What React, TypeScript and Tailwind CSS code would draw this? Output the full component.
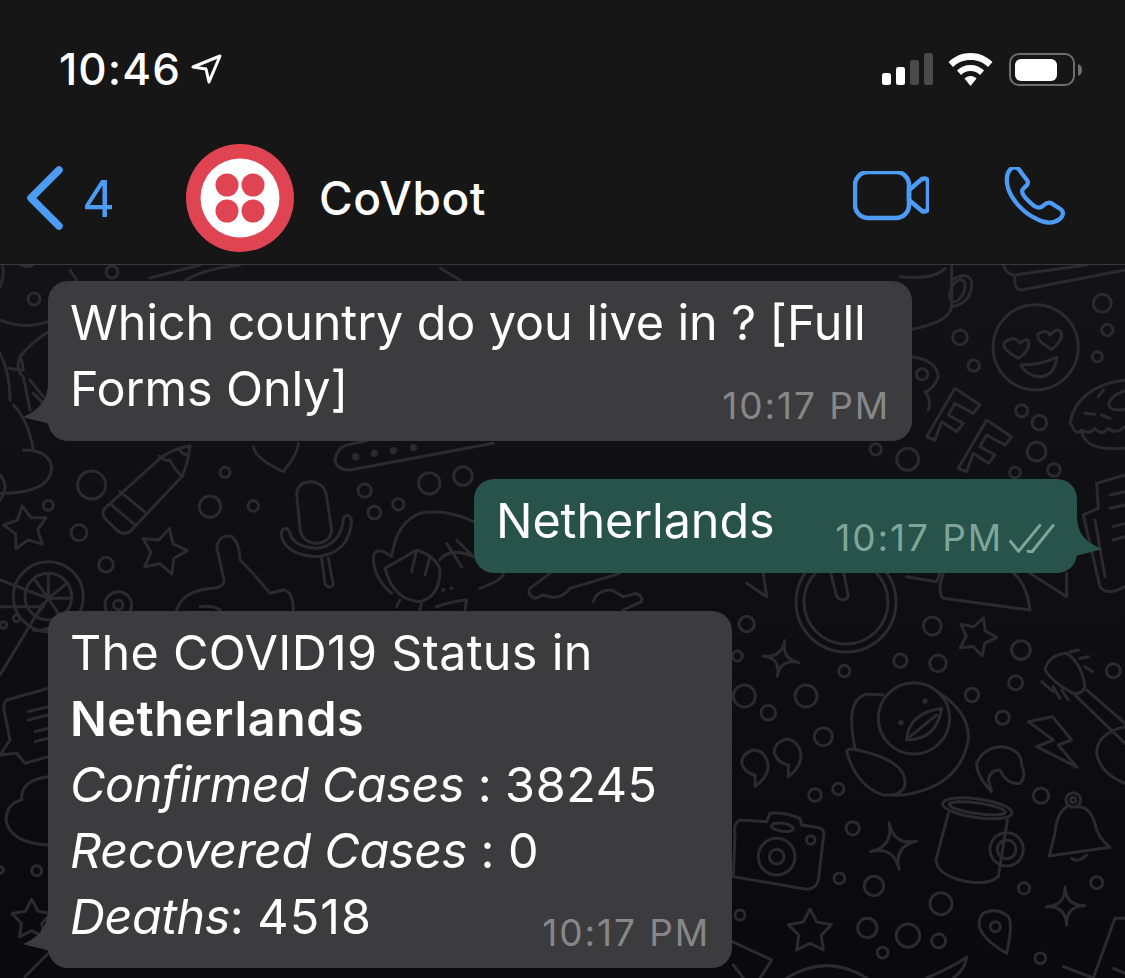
import React from "react";

function star(cx: number, cy: number, R: number, rot = -90) {
  let d = "";
  for (let i = 0; i < 10; i++) {
    const r = i % 2 === 0 ? R : R * 0.52;
    const a = ((rot + i * 36) * Math.PI) / 180;
    d += `${i === 0 ? "M" : "L"}${(cx + r * Math.cos(a)).toFixed(1)} ${(cy + r * Math.sin(a)).toFixed(1)} `;
  }
  return d + "Z";
}

function sparkle(t: number[], r: number[], b: number[], l: number[], c: number[]) {
  const q = (p: number[]) => `Q${c[0]} ${c[1]} ${p[0]} ${p[1]} `;
  return `M${t[0]} ${t[1]} ` + q(r) + q(b) + q(l) + q(t) + "Z";
}

function Circles({ items }: { items: number[][] }) {
  return (
    <>
      {items.map(([cx, cy, r], i) => (
        <circle key={i} cx={cx} cy={cy} r={r} />
      ))}
    </>
  );
}

const INK = "#2b2b2e";

function Doodles() {
  return (
    <svg
      className="absolute inset-0 w-full h-full"
      viewBox="0 265 1125 713"
      fill="none"
      stroke={INK}
      strokeWidth="3"
      strokeLinecap="round"
      strokeLinejoin="round"
    >
      <g transform="translate(0 380) scale(.3333)" strokeWidth="9">
        <path d="M320 380L480 235Q520 205 570 197Q565 250 545 290L395 450Q375 470 350 450L315 415Q300 398 320 380Z" />
        <path d="M360 335L440 400M335 375L405 435M478 228Q495 245 510 240Q520 265 548 290M537 205Q545 225 565 225" />
        <path d="M760 200Q765 235 850 275Q895 220 895 190" />
        <path d="M1480 190L1050 270Q1010 270 1005 240Q1010 205 1040 195L1100 182" />
        <g fill={INK} stroke="none">
          <Circles items={[[1067, 230, 11], [1123, 220, 11], [1180, 212, 11], [1240, 203, 11]]} />
        </g>
        <Circles items={[[275, 315, 42], [675, 277, 15], [630, 380, 32], [760, 378, 16], [145, 376, 15], [237, 458, 24], [318, 554, 22], [1094, 332, 20], [1288, 310, 32], [1389, 288, 28], [1123, 398, 19], [1195, 373, 17], [355, 675, 40], [355, 675, 14]]} />
        <path d={star(78, 445, 68, -100)} />
        <path d={star(490, 515, 72, -75)} />
        <path d="M890 340Q895 305 935 305Q975 310 980 350L995 450Q990 490 945 490Q905 485 900 445Z" />
        <path d="M855 445Q840 450 845 470Q860 525 950 530Q1050 520 1055 420Q1045 395 1030 415Q1025 495 950 505Q880 500 870 460Q865 445 855 445ZM965 535L975 610Q985 630 1000 615L985 535" />
        <path d="M530 690Q550 630 640 625Q680 620 670 590L650 500Q660 460 695 470Q720 490 720 540Q770 590 810 640L850 630Q880 635 880 690M600 680Q640 675 660 690" />
        <path d="M1420 425Q1340 385 1260 400Q1190 425 1175 530Q1120 490 1120 540Q1125 600 1175 640M1155 565Q1180 660 1260 665Q1320 650 1320 570Q1310 530 1250 510Q1200 540 1155 565ZM1250 510L1235 575M1290 530L1275 585M1320 540Q1350 500 1420 530M1340 490L1385 560M1370 480L1420 530M1190 680L1200 660M1260 690L1265 670M1310 680Q1350 665 1400 660L1395 690" />
        <circle cx="1330" cy="630" r="6" fill={INK} stroke="none" />
        <circle cx="1355" cy="625" r="6" fill={INK} stroke="none" />
        <path d="M100 210Q85 120 40 75M0 340Q150 340 155 265Q150 210 70 210M0 285Q30 320 0 360" />
        <circle cx="145" cy="650" r="105" />
        <circle cx="145" cy="650" r="70" />
        <path d="M145 655L145 580M145 655L200 610M145 655L215 655M145 655L100 720M145 655L185 715M145 655L105 600M0 600L145 655M0 680L130 680" />
      </g>
      <g transform="translate(720 620) scale(.3333)" strokeWidth="9">
        <Circles items={[[73, 228, 33], [258, 228, 33], [145, 278, 22], [310, 350, 27], [373, 153, 17], [541, 122, 20], [654, 130, 25], [637, 18, 27], [80, 12, 23], [52, 108, 15], [903, 90, 28], [887, 188, 21], [1180, 152, 21], [756, 225, 20], [848, 293, 20], [963, 527, 23], [285, 525, 19], [355, 507, 17], [398, 625, 20], [358, 775, 16], [462, 798, 29], [663, 851, 33], [912, 805, 17], [1130, 788, 18], [60, 885, 15], [442, 924, 29], [564, 947, 35], [656, 963, 21], [488, 998, 16], [961, 1015, 16]]} />
        <path d={star(270, 935, 68, -90)} />
        <path d={star(770, 50, 60, -70)} />
        <path d={sparkle([195, 62], [236, 128], [172, 168], [130, 108], [183, 115])} />
        <path d={sparkle([507, 608], [590, 663], [537, 748], [452, 695], [522, 678])} />
        <path d={sparkle([1035, 800], [1095, 857], [1040, 915], [978, 860], [1037, 858])} />
        <circle cx="582" cy="295" r="107" />
        <path d="M490 225L440 222Q395 235 395 300Q395 340 405 385M660 220Q750 280 745 360Q720 500 550 525L490 525Q410 500 380 395Q380 385 400 388Q560 420 555 490Q555 515 520 525" />
        <path d="M560 360Q565 280 665 265Q650 360 560 360ZM570 350L650 285" />
        <circle cx="615" cy="243" r="8" fill={INK} stroke="none" />
        <circle cx="543" cy="308" r="8" fill={INK} stroke="none" />
        <path d="M105 500Q145 470 145 435Q135 390 100 390Q65 400 65 430Q75 460 105 465Z" />
        <path d="M205 470Q245 440 243 400Q230 355 195 358Q160 370 163 400Q175 430 205 435Z" />
        <path d="M815 515Q770 470 770 430Q790 380 850 380Q905 390 905 435Q920 470 900 490Q860 495 840 450Q810 450 805 480Z" />
        <path d="M925 305L998 290L1055 360L1015 375L1072 442L950 380L1000 360Z" />
        <path d="M60 600Q40 610 45 640L40 770L260 808Q290 805 295 780L312 640Q310 625 290 622L245 615L240 595Q190 575 150 580L140 605Z" />
        <circle cx="170" cy="710" r="55" />
        <circle cx="170" cy="710" r="22" />
        <circle cx="272" cy="660" r="13" />
        <ellipse cx="187" cy="622" rx="33" ry="12" transform="rotate(8 187 622)" />
        <ellipse cx="772" cy="565" rx="105" ry="28" transform="rotate(8 772 565)" />
        <ellipse cx="772" cy="565" rx="85" ry="16" transform="rotate(8 772 565)" />
        <path d="M685 580L648 720Q650 760 720 780Q800 800 835 770L862 600" />
        <circle cx="860" cy="688" r="50" />
        <circle cx="860" cy="688" r="28" />
        <circle cx="1060" cy="540" r="22" />
        <circle cx="1060" cy="540" r="8" />
        <path d="M1040 560Q1010 580 1005 640L988 708L1170 682Q1130 650 1125 610Q1110 560 1075 560M1055 715Q1075 730 1100 705" />
        <path d="M790 880Q830 860 865 890Q880 910 860 1000Q790 960 778 920Q775 895 790 880Z" />
        <circle cx="826" cy="920" r="15" />
        <path d="M975 150Q985 105 1040 100Q1085 130 1095 200Q1085 225 1060 220Q1000 190 975 150ZM1050 95L1075 90M1080 115L1105 110M1095 140L1118 155M965 185L1000 215M1000 200L1020 235M1025 210L1045 240M1065 225L1215 370M1100 210L1215 310M1215 320Q1130 340 1130 400Q1140 460 1215 490" />
        <path d="M37 965L155 1020L120 1074M40 1035L70 1074M200 1074Q320 1000 440 1074M620 1074Q700 1040 740 1012Q735 1050 700 1074M1120 1074L1185 895L1215 895M1030 1040L1120 1074M1180 1045L1215 1060" />
      </g>
      <g transform="translate(780 380) scale(.3333)" strokeWidth="9">
        <path d="M440 170L525 25L600 75L580 100L525 70L505 105L550 130L530 155L485 125L465 180Z" />
        <path d="M535 265L620 120L695 170L675 195L620 165L600 200L645 225L625 250L580 220L560 275Z" />
        <Circles items={[[725, 92, 18], [778, 128, 22], [770, 215, 28], [705, 278, 16], [822, 270, 19], [287, 208, 17], [383, 238, 33]]} />
        <path d="M870 130Q890 20 1035 0M875 135Q890 170 905 150Q910 215 1035 205M905 150Q930 165 945 145Q965 170 985 145Q1005 165 1035 140M915 100L945 103M965 105L990 115M955 50L970 30" />
        <ellipse cx="1035" cy="60" rx="50" ry="26" transform="rotate(-20 1035 60)" />
        <path d="M950 310L1035 285M950 310L955 385L910 405L960 620Q980 650 1035 620M990 345L1035 335M990 385L1035 375M1000 440L1035 430M1000 480L1035 470M945 420L975 590" />
        <path d="M150 570L170 650Q190 670 205 650L190 570M380 590L470 605L480 580M490 580Q470 640 490 655L750 690Q740 610 700 580M750 580L860 650L860 580" />
      </g>
      <circle cx="846" cy="602" r="50" />
      <circle cx="846" cy="602" r="42" />
      <g transform="translate(900 260) scale(.3333)" strokeWidth="9">
        <circle cx="407" cy="262" r="128" />
        <Circles items={[[607, 130, 27], [622, 210, 17], [592, 290, 15], [180, 232, 22], [221, 317, 17], [66, 343, 17]]} />
        <path d="M355 295Q300 265 315 245Q345 225 360 250Q390 225 385 260Q380 280 355 295Z" />
        <path d="M455 268Q405 240 415 222Q440 205 450 225Q480 195 485 225Q485 245 455 268Z" />
        <path d="M362 315Q420 315 470 292Q465 350 415 350Q380 345 362 315Z" />
        <path d="M36 208Q150 185 155 140L155 15M0 50Q100 60 135 25M155 60Q210 30 215 70Q215 130 155 140M310 15Q320 45 345 45L560 15M345 50Q340 90 365 90L675 30M36 290Q110 300 115 350Q100 390 75 395Q95 420 85 450" />
        <ellipse cx="172" cy="92" rx="20" ry="35" transform="rotate(25 172 92)" />
      </g>
      <g transform="translate(0 260) scale(.3333)" strokeWidth="9">
        <circle cx="102" cy="117" r="18" />
        <path d="M0 180Q70 210 145 185M0 280Q30 340 30 420M145 215Q90 250 60 290Q45 330 70 350L90 450M60 290Q70 310 70 330M90 360L130 410M100 400L130 430M25 325L65 330" />
        <path d="M0 0Q20 30 0 80M210 30L230 60M60 15Q80 25 100 15" />
      </g>
      <g transform="translate(0 600) scale(.3333)" strokeWidth="9">
        <path d="M0 225L130 10M100 90Q160 100 210 20" />
        <Circles items={[[10, 75, 10], [50, 55, 10], [110, 812, 15], [0, 810, 10]]} />
        <path d="M145 265L20 300Q10 310 12 330L30 420L0 465L50 460L75 490L145 470M85 335L145 320M85 360L145 345M105 395L145 385M105 425L145 415M145 530Q60 540 65 600Q20 610 18 660Q30 730 145 735M75 1130L145 1060" />
        <path d={star(95, 960, 62, -90)} />
      </g>
      <g transform="translate(480 560) scale(.3333)" strokeWidth="9">
        <path d="M420 40L270 85Q240 125 190 105L165 115Q140 105 150 85L210 40M340 125Q350 90 395 90L430 110L470 100Q490 110 485 125L430 150M800 70L860 110L850 40M0 85Q70 60 70 40" />
      </g>
      <path d="M112 272m-6 0a6 6 0 1 0 12 0a6 6 0 1 0-12 0M180 285Q195 270 240 265M440 268L460 280M150 278L200 265" />
    </svg>
  );
}

function Tail({ side }: { side: "left" | "right" }) {
  if (side === "left") {
    return (
      <svg className="absolute left-[-26px] bottom-[12px] w-[30px] h-[50px]" viewBox="0 0 30 50">
        <path d="M26 4C26 22 14 33 1 38C10 41 20 42 30 46L30 4Z" fill="#3c3c3e" />
      </svg>
    );
  }
  return (
    <svg className="absolute right-[-26px] bottom-[12px] w-[30px] h-[50px]" viewBox="0 0 30 50">
      <path d="M4 4C4 22 12 31 29 38C20 41 12 42 0 46L0 4Z" fill="#27534a" />
    </svg>
  );
}

function Time({ green }: { green?: boolean }) {
  return (
    <span className={`block text-[37px] leading-[40px] font-normal tracking-[1.9px] whitespace-nowrap ${green ? "text-[#7fa59b]" : "text-[#87878a]"}`}>
      10:17 PM
    </span>
  );
}

export default function App() {
  return (
    <div
      className="w-[1125px] h-[978px] overflow-hidden bg-[#161616] text-white"
      style={{ fontFamily: "Inter, 'Liberation Sans', sans-serif" }}
    >
      <header className="h-[264px] bg-[#161616]">
        <div className="h-[132px] pt-[6px] pl-[59px] pr-[43px] flex items-center justify-between">
          <div className="flex items-center">
            <span className="text-[44px] leading-none font-medium tracking-[1.1px]">10:46</span>
            <svg className="ml-[10px] w-[31px] h-[30px]" viewBox="0 0 31 30" fill="none" stroke="#fff" strokeWidth="3" strokeLinejoin="round">
              <path d="M2 13L29 2L18 28L15 15Z" />
            </svg>
          </div>
          <div className="flex items-center">
            <svg className="w-[51px] h-[32px]" viewBox="0 0 51 32">
              <rect x="0" y="20" width="9" height="12" rx="2.5" fill="#fff" />
              <rect x="14" y="14" width="9" height="18" rx="2.5" fill="#fff" />
              <rect x="28" y="7" width="9" height="25" rx="2.5" fill="#4a4a4a" />
              <rect x="42" y="0" width="9" height="32" rx="2.5" fill="#4a4a4a" />
            </svg>
            <svg className="ml-[15px] w-[45px] h-[33px]" viewBox="0 0 45 33" fill="#fff">
              <path d="M22.5 0C14 0 6.5 3.3 0.5 9L5 14C9.5 9.5 15.5 7 22.5 7S35.5 9.5 40 14L44.5 9C38.5 3.3 31 0 22.5 0Z" />
              <path d="M22.5 12C17 12 12.5 14 9 17.5L13 22C15.5 19.5 18.8 18 22.5 18S29.5 19.5 32 22L36 17.5C32.5 14 28 12 22.5 12Z" />
              <path d="M22.5 23C20 23 18 24 16.5 25.5L22.5 33L28.5 25.5C27 24 25 23 22.5 23Z" />
            </svg>
            <svg className="ml-[16px] w-[73px] h-[33px]" viewBox="0 0 73 33">
              <rect x="1" y="1" width="64" height="31" rx="9" fill="none" stroke="#6f6f6f" strokeWidth="2" />
              <rect x="6" y="6" width="42" height="22" rx="6" fill="#fff" />
              <path d="M69 11C72 12 73 14 73 17S72 22 69 23Z" fill="#6f6f6f" />
            </svg>
          </div>
        </div>
        <div className="h-[132px] pl-[27px] pr-[59px] flex items-center">
          <svg className="w-[36px] h-[64px]" viewBox="0 0 36 64" fill="none" stroke="#4c9bf5" strokeWidth="7.5" strokeLinecap="round" strokeLinejoin="round">
            <path d="M32 4L4 32L32 60" />
          </svg>
          <span className="ml-[19px] w-[29px] text-[51px] leading-none font-normal text-[#4c9bf5]">4</span>
          <svg className="ml-[75px] w-[108px] h-[108px]" viewBox="0 0 108 108">
            <circle cx="54" cy="54" r="54" fill="#e04352" />
            <circle cx="54" cy="54" r="39.5" fill="#fff" />
            <circle cx="41" cy="41" r="11.5" fill="#e04352" />
            <circle cx="67" cy="41" r="11.5" fill="#e04352" />
            <circle cx="41" cy="67" r="11.5" fill="#e04352" />
            <circle cx="67" cy="67" r="11.5" fill="#e04352" />
          </svg>
          <span className="ml-[25px] text-[46px] leading-none font-medium tracking-[0.6px]">CoVbot</span>
          <div className="ml-auto flex items-center">
            <svg className="w-[76px] h-[54px]" viewBox="0 1 76 54" fill="none" stroke="#4c9bf5" strokeWidth="4.5" strokeLinejoin="round">
              <rect x="2" y="2" width="54" height="46" rx="13" />
              <path d="M56 20L69 9Q75 7 75 13V37Q75 43 69 41L56 30Z" />
            </svg>
            <svg className="ml-[71px] w-[66px] h-[63px]" viewBox="660 439 200 190" fill="none" stroke="#4c9bf5" strokeWidth="13" strokeLinejoin="round">
              <path d="M695 442C708 436 716 442 722 452L743 480C748 490 740 495 730 505C722 513 730 525 745 540C762 557 772 565 785 560C796 553 802 542 815 548L843 566C855 574 852 588 840 597C820 612 795 610 765 593C725 572 695 535 685 505C678 480 680 455 695 442Z" />
            </svg>
          </div>
        </div>
      </header>
      <main className="relative h-[714px] border-t border-[#39393b] bg-gradient-to-b from-[#131317] to-[#0a0a0c] px-[48px] pt-[16px] flex flex-col items-start">
        <Doodles />
        <div className="relative w-[864px] h-[160px] rounded-[20px] bg-[#3c3c3e] pl-[22px] pt-[9px] text-[48.5px] leading-[66px] tracking-[-0.1px]">
          <Tail side="left" />
          <p className="relative">Which country do you live in ? [Full<br />Forms Only]</p>
          <div className="absolute right-[22px] bottom-[15px]"><Time /></div>
        </div>
        <div className="relative ml-auto mt-[38px] w-[603px] h-[94px] rounded-[20px] bg-[#27534a] pl-[22px] pt-[9px] text-[48.5px] leading-[66px] tracking-[-0.1px]">
          <Tail side="right" />
          <p>Netherlands</p>
          <div className="absolute right-[22px] bottom-[15px] flex items-center">
            <Time green />
            <svg className="ml-[5px] w-[47px] h-[30px]" viewBox="685 425 140 90" fill="none" stroke="#7fa59b" strokeWidth="9" strokeLinecap="round" strokeLinejoin="round">
              <path d="M692 480L716 510L780 432M745 510L756 512L820 432" />
            </svg>
          </div>
        </div>
        <div className="relative mt-[38px] w-[684px] h-[357px] rounded-[20px] bg-[#3c3c3e] pl-[22px] pt-[9px] text-[48.5px] leading-[66px] tracking-[-0.1px]">
          <Tail side="left" />
          <p className="relative tracking-[0.3px]">The COVID19 Status in</p>
          <p className="relative font-semibold tracking-[0.55px]">Netherlands</p>
          <p className="relative"><em className="tracking-[-0.4px]">Confirmed Cases</em> : <span className="tracking-[0.6px]">38245</span></p>
          <p className="relative"><em className="tracking-[-0.3px]">Recovered Cases</em> : 0</p>
          <p className="relative"><em className="tracking-[-0.5px]">Deaths</em>: <span className="tracking-[1.1px]">4518</span></p>
          <div className="absolute right-[22px] bottom-[15px]"><Time /></div>
        </div>
      </main>
    </div>
  );
}
